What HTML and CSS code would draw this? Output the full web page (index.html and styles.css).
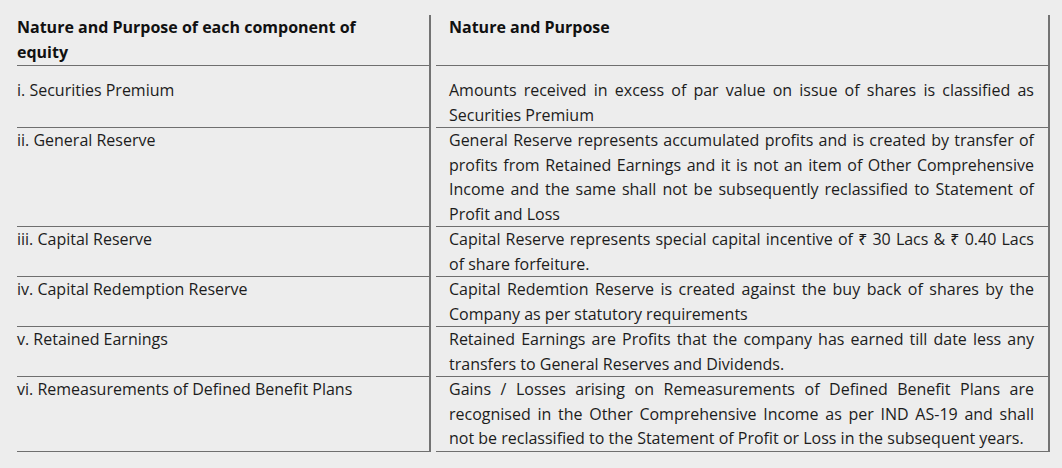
FILE: index.html
```html
<!DOCTYPE html>
<html lang="en">
<head>
<meta charset="utf-8">
<title>Nature and Purpose of each component of equity</title>
<link rel="stylesheet" href="styles.css">
</head>
<body>
<div class="equity-table">
  <div class="cell head left">Nature and Purpose of each component of equity</div>
  <div class="cell head right">Nature and Purpose</div>

  <div class="cell left first">i. Securities Premium</div>
  <div class="cell right first">Amounts received in excess of par value on issue of shares is classified as Securities Premium</div>

  <div class="cell left">ii. General Reserve</div>
  <div class="cell right">General Reserve represents accumulated profits and is created by transfer of profits from Retained Earnings and it is not an item of Other Comprehensive Income and the same shall not be subsequently reclassified to Statement of Profit and Loss</div>

  <div class="cell left">iii. Capital Reserve</div>
  <div class="cell right">Capital Reserve represents special capital incentive of ₹ 30 Lacs &amp; ₹ 0.40 Lacs of share forfeiture.</div>

  <div class="cell left">iv. Capital Redemption Reserve</div>
  <div class="cell right">Capital Redemtion Reserve is created against the buy back of shares by the Company as per statutory requirements</div>

  <div class="cell left">v. Retained Earnings</div>
  <div class="cell right">Retained Earnings are Profits that the company has earned till date less any transfers to General Reserves and Dividends.</div>

  <div class="cell left">vi. Remeasurements of Defined Benefit Plans</div>
  <div class="cell right">Gains / Losses arising on Remeasurements of Defined Benefit Plans are recognised in the Other Comprehensive Income as per IND AS-19 and shall not be reclassified to the Statement of Profit or Loss in the subsequent years.</div>
</div>
</body>
</html>
```
FILE: styles.css
```css
html, body {
  margin: 0;
  padding: 0;
  background: #ededed;
}

body {
  padding: 15px 0 0 17px;
  font-family: "Open Sans", "Noto Sans", sans-serif;
  font-size: 16px;
  color: #1c1c1c;
}

.equity-table {
  display: grid;
  grid-template-columns: 414px 614px;
  column-gap: 5px;
}

.cell {
  line-height: 24.5px;
  border-bottom: 1px solid #6f6f6f;
  border-right: 2px solid #737373;
}

.left {
  padding-right: 2px;
}

.right {
  padding: 0 14px 0 13px;
  text-align: justify;
}

.head {
  font-weight: 700;
  color: #111;
  padding-right: 40px;
  padding-bottom: 1px;
}

.head.right {
  padding-right: 11px;
}

.first {
  padding-top: 12px;
}
```
